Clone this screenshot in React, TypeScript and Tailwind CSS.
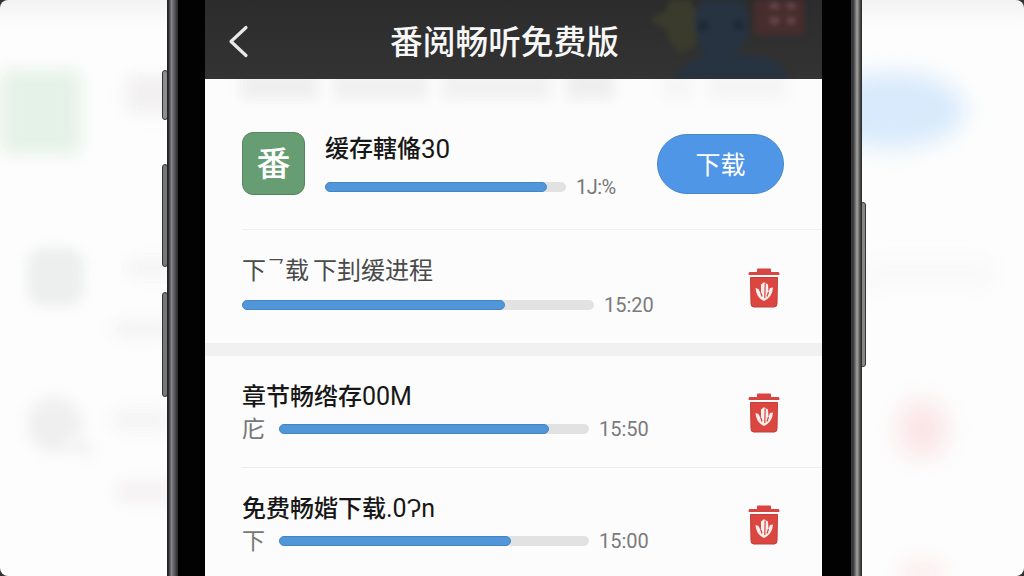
import { ReactNode } from "react";

interface ProgressBarProps {
  value: number;
  className?: string;
}

const ProgressBar = ({ value, className = "" }: ProgressBarProps) => {
  return (
    <div className={`h-[10px] shrink-0 rounded-full bg-[#e2e2e3] ${className}`}>
      <div
        className="h-full rounded-full border border-[#4485c4] bg-[#5096d9]"
        style={{ width: `${value}%` }}
      />
    </div>
  );
};

const TrashIcon = () => {
  return (
    <svg width="32" height="40" viewBox="0 0 32 40">
      <path d="M9 1.5Q9 .5 10 .5H22Q23 .5 23 1.5V4H30.5Q31.5 4 31.5 7H.5Q.5 4 1.5 4H9Z" fill="#d8443f" />
      <path
        d="M2.5 9.5H29.5L29 36Q29 39 26 39H6Q3 39 3 36Z"
        fill="#dc4640"
        stroke="#c43d38"
        strokeWidth="1"
      />
      <path
        d="M7.5 20L10.5 21L13 26V16.5L16 14.2L20 16.5L20.5 24L22 20L25 19.5Q24.5 29 16 33Q8 29.5 7.5 20Z"
        fill="#fbeeed"
      />
      <path d="M17.2 15.5L16.8 30M13 25L14 28.5M20.5 24L19 28.5" fill="none" stroke="#cf4540" strokeWidth="1.2" />
    </svg>
  );
};

interface DownloadRowProps {
  title: ReactNode;
  suffix?: string;
  prefix?: string;
  time: string;
  value: number;
  muted?: boolean;
  className?: string;
}

const DownloadRow = ({ title, suffix, prefix, time, value, muted, className = "" }: DownloadRowProps) => {
  return (
    <div className={`flex justify-between pl-[37px] pr-[42px] ${className}`}>
      <div>
        <div
          className={
            muted
              ? "flex h-8 items-center whitespace-pre text-2xl text-[#4a4a4a]"
              : "flex h-8 items-center whitespace-pre text-2xl font-medium text-[#171717]"
          }
        >
          {title}
          {suffix && <span className="text-[25px] font-normal">{suffix}</span>}
        </div>
        <div className={prefix ? "flex h-8 items-center" : "mt-0.5 flex h-8 items-center"}>
          {prefix && <span className="mt-0.5 w-[37px] text-[23px] text-[#777]">{prefix}</span>}
          <ProgressBar value={value} className={prefix ? "w-[310px]" : "w-[352px]"} />
          <span className="ml-2.5 text-xl text-[#7b7b7b]">{time}</span>
        </div>
      </div>
      <button className={prefix ? "mt-3 h-10" : "mt-[13px] h-10"}>
        <TrashIcon />
      </button>
    </div>
  );
};

const Header = () => {
  return (
    <header className="relative flex h-[79px] items-center justify-center overflow-hidden bg-gradient-to-b from-[#2c2c2c] to-[#333333]">
      <svg className="absolute right-0 top-0 blur-[2.5px]" width="180" height="79" viewBox="0 0 180 79">
        <path d="M8 20L24 10L28 0H48L56 14L54 46L38 54L28 42L24 30Z" fill="#3a3b2d" />
        <path d="M53 14Q60-8 82-8Q106-5 107 24Q108 49 88 52L126 58Q143 65 147 79H33Q38 63 62 56Q52 38 53 14Z" fill="#273340" />
        <path d="M56 21H66V31H56ZM92 20H101V30H92Z" fill="#1d2934" />
        <path d="M112 0H162V35H112Z" fill="#482d2d" />
        <path d="M128 3H137V9H128ZM145 3H153V9H145ZM128 17H137V24H128ZM145 17H153V24H145Z" fill="#654747" />
      </svg>
      <svg className="absolute left-[23px] top-[25px]" width="22" height="33" viewBox="0 0 22 33">
        <path d="M18 2.5L3 16.5L18 30.5" fill="none" stroke="#e8e8e8" strokeWidth="3.2" strokeLinecap="round" strokeLinejoin="round" />
      </svg>
      <h1 className="relative mr-[18px] mt-[7px] text-[32.7px] font-medium leading-none text-[#f7f7f7]">番阅畅听免费版</h1>
    </header>
  );
};

const Screen = () => {
  return (
    <main className="relative w-[617px] shrink-0 overflow-hidden bg-[#fcfcfc]">
      <Header />
      <div className="absolute inset-x-0 top-[79px] h-10 overflow-hidden px-9">
        <div className="-mt-2 flex h-7 gap-4 blur-[6px]">
          <i className="w-20 bg-[#efefef]" />
          <i className="w-24 bg-[#f0f0f0]" />
          <i className="w-28 bg-[#f1f1f1]" />
          <i className="w-12 bg-[#eeeeee]" />
          <i className="ml-8 w-8 bg-[#f6f6f6]" />
          <i className="w-20 bg-[#f5f5f5]" />
        </div>
      </div>
      <section className="relative flex h-[150px] pl-[37px] pr-[38px] pt-[53px]">
        <div className="flex size-[63px] shrink-0 items-center justify-center rounded-[11px] border border-[#55875f] bg-[#679d72] text-[34px] font-medium leading-none text-white">
          番
        </div>
        <div className="ml-5 flex-1">
          <div className="flex h-[34px] items-center text-2xl font-medium text-[#171717]">
            缓存轄偹<span className="text-[26px] font-normal">30</span>
          </div>
          <div className="mt-[5px] flex h-8 items-center">
            <ProgressBar value={92.3} className="w-[241px]" />
            <span className="ml-2.5 text-xl tracking-[-0.5px] text-[#777]">1J:%</span>
          </div>
        </div>
        <button className="mt-0.5 h-[60px] w-[127px] rounded-full border border-[#4587d0] bg-[#4f96e7] pt-1 text-[25px] text-white">
          下载
        </button>
      </section>
      <div className="ml-[37px] h-px bg-[#efefef]" />
      <DownloadRow
        className="h-[113px] pt-[25px]"
        title={
          <>
            下<span className="mb-2 w-[19px] pl-0.5 text-base">乛</span>载<span className="ml-1">下刲缓进程</span>
          </>
        }
        time="15:20"
        value={74.8}
        muted
      />
      <div className="h-[13px] bg-[#f1f1f1]" />
      <DownloadRow
        className="h-[111px] pt-[25px]"
        title="章节畅绺存"
        suffix="00M"
        prefix="庀"
        time="15:50"
        value={87}
      />
      <div className="ml-[37px] h-px bg-[#ebebeb]" />
      <DownloadRow
        className="h-[108px] pt-[25px]"
        title="免费畅媘下载"
        suffix=".0Ɂn"
        prefix="下"
        time="15:00"
        value={74.8}
      />
    </main>
  );
};

const Backdrop = () => {
  return (
    <div className="absolute inset-0 overflow-hidden rounded-lg bg-gradient-to-b from-[#f3f3f3] via-[#fdfdfd] via-5% to-[#fdfdfd]">
      <div className="absolute left-0 top-[70px] h-[84px] w-[81px] rounded-lg bg-[#e5f2e8] blur-[8px]" />
      <div className="absolute left-[27px] top-[248px] h-[58px] w-[57px] rounded-2xl bg-[#ecefee] blur-[6px]" />
      <div className="absolute left-[27px] top-[397px] size-[55px] rounded-full bg-[#efefef] blur-[7px]" />
      <div className="absolute left-[65px] top-[438px] h-4 w-7 rotate-[30deg] bg-[#f4f4f4] blur-[6px]" />
      <div className="absolute left-[127px] top-[76px] h-9 w-14 bg-[#f2f0f1] blur-[8px]" />
      <div className="absolute left-[127px] top-[258px] h-5 w-14 bg-[#f5f5f5] blur-[7px]" />
      <div className="absolute left-[114px] top-[320px] h-[18px] w-14 bg-[#f4f4f4] blur-[7px]" />
      <div className="absolute left-[114px] top-[408px] h-6 w-14 bg-[#f5f5f5] blur-[7px]" />
      <div className="absolute left-[117px] top-[480px] h-6 w-14 bg-[#f6f3f3] blur-[6px]" />
      <div className="absolute left-[820px] top-[72px] h-[76px] w-[145px] rounded-[50%] bg-[#d8eafb] blur-[11px]" />
      <div className="absolute left-[866px] top-[258px] h-8 w-[125px] bg-[#f9f9f9] blur-[8px]" />
      <div className="absolute left-[898px] top-[400px] h-[58px] w-[48px] rounded-full bg-[#fbe5e6] blur-[12px]" />
      <div className="absolute left-[899px] top-[560px] h-[28px] w-[46px] rounded-full bg-[#fbefed] blur-[10px]" />
    </div>
  );
};

export default function App() {
  return (
    <div
      lang="zh-CN"
      className="relative h-[576px] w-[1024px] overflow-hidden bg-[#30332f] font-[Roboto,'Noto_Sans_CJK_SC',sans-serif]"
    >
      <Backdrop />
      {/* side keys */}
      <div className="absolute left-[162px] top-[70px] h-[50px] w-[6px] rounded-sm border border-[#333] bg-[#8d8d90]" />
      <div className="absolute left-[162px] top-[164px] h-[103px] w-[6px] rounded-sm border border-[#333] bg-[#77777b]" />
      <div className="absolute left-[162px] top-[292px] h-[105px] w-[6px] rounded-sm border border-[#333] bg-[#77777b]" />
      <div className="absolute left-[860px] top-[202px] h-[165px] w-[6px] rounded-sm border border-[#333] bg-[#888889]" />

      <div className="relative ml-[167px] flex h-[576px] w-[695px]">
        <div className="w-[11px] shrink-0 bg-gradient-to-r from-[#232326] from-10% via-[#85858b] via-40% to-[#28282b]" />
        <div className="w-[27px] shrink-0 bg-[#020202]" />
        <Screen />
        <div className="w-[29px] shrink-0 bg-[#020202]" />
        <div className="w-[11px] shrink-0 bg-gradient-to-r from-[#38383a] from-20% via-[#a3a3a1] via-55% to-[#202020]" />
      </div>
    </div>
  );
}
